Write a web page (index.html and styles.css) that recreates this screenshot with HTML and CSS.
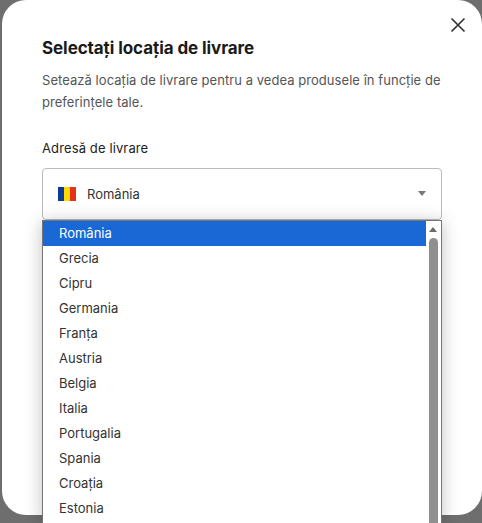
FILE: index.html
```html
<!DOCTYPE html>
<html lang="ro">
<head>
<meta charset="utf-8">
<title>Selectați locația de livrare</title>
<link rel="stylesheet" href="styles.css">
</head>
<body>
<main class="modal">
  <button class="close" aria-label="Închide">
    <svg width="16" height="16" viewBox="0 0 16 16"><path d="M1.5 1.5l13 13M14.5 1.5l-13 13" stroke="#333" stroke-width="1.7" fill="none"/></svg>
  </button>
  <h1 class="title">Selectaţi locația de livrare</h1>
  <p class="desc">Setează locația de livrare pentru a vedea produsele în funcție de preferințele tale.</p>
  <label class="label">Adresă de livrare</label>
  <div class="field">
    <div class="select">
      <svg class="flag" width="18" height="14" viewBox="0 0 18 14"><rect width="6" height="14" fill="#0a3a9a"/><rect x="6" width="6" height="14" fill="#ffd800"/><rect x="12" width="6" height="14" fill="#e5301a"/></svg>
      <span class="value">România</span>
      <span class="caret"></span>
    </div>
    <div class="dropdown">
      <ul class="options">
        <li class="option selected">România</li>
        <li class="option">Grecia</li>
        <li class="option">Cipru</li>
        <li class="option">Germania</li>
        <li class="option">Franța</li>
        <li class="option">Austria</li>
        <li class="option">Belgia</li>
        <li class="option">Italia</li>
        <li class="option">Portugalia</li>
        <li class="option">Spania</li>
        <li class="option">Croația</li>
        <li class="option">Estonia</li>
      </ul>
      <div class="scrollbar">
        <span class="arrow"></span>
        <span class="thumb"></span>
      </div>
    </div>
  </div>
</main>
</body>
</html>
```
FILE: styles.css
```css
* { box-sizing: border-box; }
html, body { margin: 0; height: 100%; }
body {
  width: 482px; height: 523px; overflow: hidden;
  background: #6e6e6e;
  padding: 0 0 8px 2px;
  font-family: Inter, "Liberation Sans", sans-serif;
  color: #1a1a1a;
}
.modal {
  position: relative;
  height: 515px;
  background: #fff;
  border-radius: 24px;
  padding: 37px 40px 0;
}
.close {
  position: absolute; top: 17px; right: 16px;
  width: 16px; height: 16px; padding: 0; border: 0; background: none; display: block;
}
.close svg { display: block; }
.title { margin: 0 0 10px; font-size: 17px; line-height: 22px; font-weight: 700; letter-spacing: -0.08px; color: #1a1a1a; }
.desc { margin: 0 0 25px; font-size: 13px; line-height: 22px; letter-spacing: 0.05px; color: #555; }
.label { display: block; font-size: 13px; line-height: 20px; letter-spacing: 0.12px; margin-bottom: 10px; color: #222; }
.field { position: relative; width: 400px; }
.select {
  height: 52px; border: 1px solid #bbb; border-radius: 4px;
  display: flex; align-items: center; padding: 0 15px; gap: 11px;
  font-size: 13px; color: #333;
}
.flag { display: block; flex: none; }
.value { flex: 1; }
.caret { width: 0; height: 0; border: 4.5px solid transparent; border-top: 5px solid #777; border-bottom: 0; margin-bottom: 2px; }
.dropdown {
  position: absolute; top: 52px; left: 0; width: 400px; height: 304px;
  background: #fff; border: 1px solid #767676; border-bottom: 0;
  box-shadow: 0 2px 16px rgba(0,0,0,.25);
  display: flex;
}
.options { list-style: none; margin: 0; padding: 0; flex: 1; font-size: 13px; color: #333; }
.option { height: 25px; line-height: 25px; padding-left: 16px; }
.option.selected { background: #1a68d6; color: #fff; }
.scrollbar { width: 15px; padding-left: 2px; padding-right: 3px; flex: none; display: flex; flex-direction: column; align-items: center; background: #fff; }
.arrow { margin: 6px 0 6px; width: 0; height: 0; border: 4.5px solid transparent; border-bottom: 5px solid #6a6a6a; border-top: 0; flex: none; }
.thumb { width: 9px; flex: 1; background: #8f8f8f; border-radius: 5px 5px 0 0; }
```
